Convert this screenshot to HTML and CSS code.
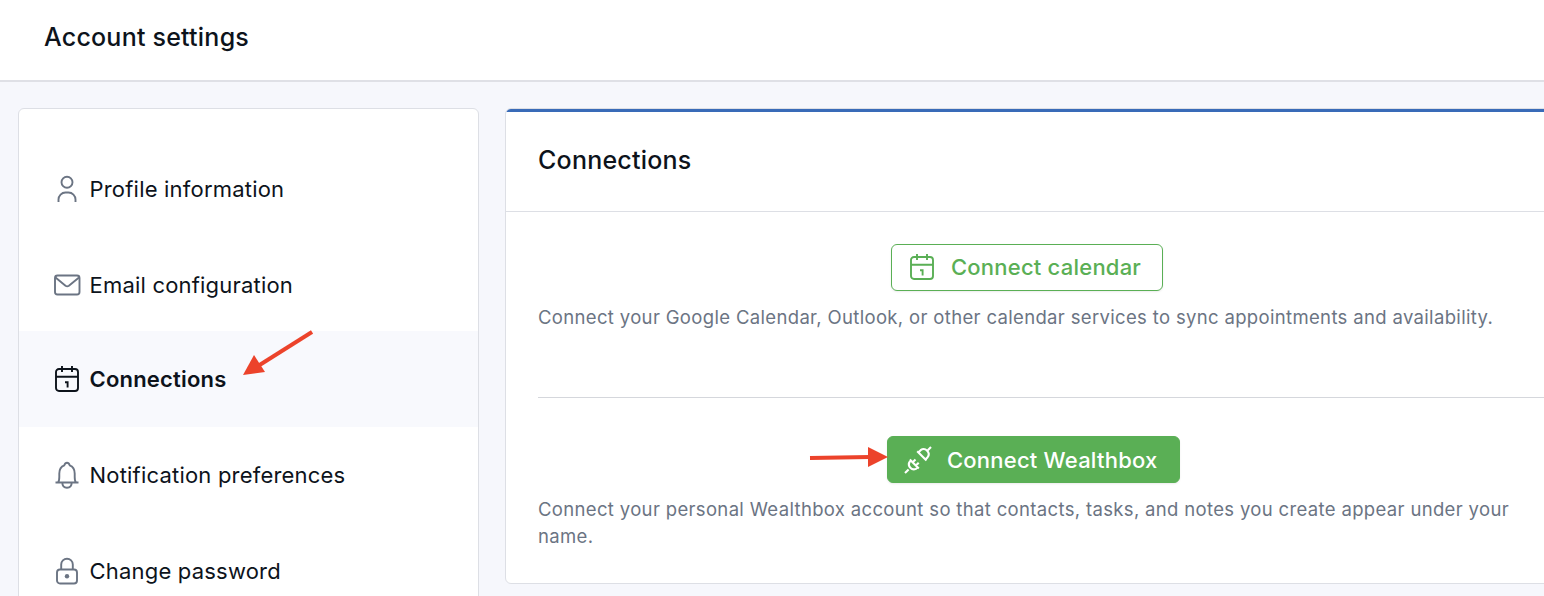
FILE: index.html
```html
<!DOCTYPE html>
<html lang="en">
<head>
<meta charset="UTF-8">
<title>Account settings</title>
<link rel="stylesheet" href="styles.css">
</head>
<body>
 <svg class="sprite">
  <symbol id="icon-calendar" viewBox="0 0 28 28">
   <rect x="3" y="4" width="22" height="22" rx="3"/>
   <path d="M3 11.800h22M9 1v6M19 1v6"/>
   <path d="M12 17.200h2.600v5.300"/>
  </symbol>
 </svg>

 <header class="page_header">
  <h1>Account settings</h1>
 </header>

 <div class="page_body">
  <nav class="sidebar">
   <a class="nav_item">
    <svg class="icon" viewBox="0 0 28 28"><circle cx="14" cy="7.2" r="5.5"/><path d="M5.500 27v-2.500a7 7 0 0 1 7-7h3a7 7 0 0 1 7 7v2.500"/></svg>
    <span class="nav_label">Profile information</span>
   </a>
   <a class="nav_item">
    <svg class="icon" viewBox="0 0 28 28"><rect x="2" y="4.500" width="24.500" height="19" rx="2.500"/><path d="M2.500 6.500l10 8.300q1.700 1.200 3.400 0L26 6.500"/></svg>
    <span class="nav_label">Email configuration</span>
   </a>
   <a class="nav_item active">
    <svg class="icon"><use href="#icon-calendar"/></svg>
    <span class="nav_label">Connections</span>
   </a>
   <a class="nav_item">
    <svg class="icon" viewBox="0 0 28 28"><path d="M2.500 21.500h23M5 21.500c1.200-1.200 1.300-3 1.300-5.500v-3.500c0-4.500 1.800-7 5-8.200C11.800 2.800 12.800 1.800 14 1.800s2.200 1 2.700 2.500c3.200 1.200 5 3.700 5 8.200V16c0 2.500.1 4.300 1.300 5.500M9.300 21.500c0 3.500 1.900 5.200 4.700 5.200s4.700-1.700 4.700-5.200"/></svg>
    <span class="nav_label">Notification preferences</span>
   </a>
   <a class="nav_item">
    <svg class="icon" viewBox="0 0 28 28"><rect x="4" y="12.500" width="20" height="14" rx="3"/><path d="M8.200 12.500V7.500a5.800 5.800 0 0 1 11.600 0v5"/><circle class="dot" cx="14" cy="19.200" r="2.200"/></svg>
    <span class="nav_label">Change password</span>
   </a>
  </nav>

  <main class="panel">
   <div class="panel_header">
    <h2>Connections</h2>
   </div>
   <div class="panel_body">
    <section class="connection calendar">
     <button class="btn btn_outline">
      <svg class="icon"><use href="#icon-calendar"/></svg>
      <span>Connect calendar</span>
     </button>
     <p>Connect your Google Calendar, Outlook, or other calendar services to sync appointments and availability.</p>
    </section>
    <section class="connection wealthbox">
     <button class="btn btn_solid">
      <svg class="icon" viewBox="0 0 28 28">
       <path d="M1 27l3.600-3.600M5.800 13.400l9 9M7 14.600l-1.700 1.700a5 5 0 0 0 6.600 6.600l1.700-1.700M8.700 16.300l2.800-2.800M11.900 19.500l2.800-2.800"/>
       <path d="M13.200 5.200l9.300 9.300M14.400 6.400l2.200-2.200a5 5 0 0 1 7 7l-2.200 2.200M23.600 4.400L27 1"/>
      </svg>
      <span>Connect Wealthbox</span>
     </button>
     <p>Connect your personal Wealthbox account so that contacts, tasks, and notes you create appear under your name.</p>
    </section>
   </div>
  </main>
 </div>

 <!-- pointers over the page -->
 <svg class="arrow arrow_nav" viewBox="0 0 72 48"><path d="M71 3L17 37" /><path class="head" d="M2 46l11-20 11 17z"/></svg>
 <svg class="arrow arrow_button" viewBox="0 0 80 24"><path d="M1 13l60-1"/><path class="head" d="M59 2v20l20-10z"/></svg>
</body>
</html>
```
FILE: styles.css
```css
* {
 box-sizing: border-box;
}
body {
 margin: 0;
 height: 596px;
 overflow: hidden;
 background-color: #f6f7fc;
 color: #0d131b;
 font-family: Inter, "Liberation Sans", sans-serif;
}
h1, h2, p {
 margin: 0;
}
h1, h2 {
 font-size: 25px;
 font-weight: 500;
 line-height: 32px;
 letter-spacing: 0.22px;
}
.sprite {
 display: none;
}
.page_header {
 height: 82px;
 padding: 21px 44px;
 background-color: #fff;
 border-bottom: 2px solid #dfe0e6;
}
.page_body {
 display: flex;
 align-items: flex-start;
 gap: 26px;
 height: 514px;
 padding: 26px 0 0 18px;
 overflow: hidden;
}
.sidebar {
 flex: none;
 width: 461px;
 height: 520px;
 padding-top: 31.3px;
 background-color: #fff;
 border: 1px solid #dddfe5;
 border-radius: 6px;
}
.nav_item {
 display: flex;
 align-items: center;
 gap: 8.5px;
 height: 95.4px;
 padding: 2.3px 0 0 34px;
 font-size: 22px;
 line-height: 26px;
 letter-spacing: 0.2px;
}
.nav_item.active {
 height: 95.5px;
 padding-top: 0;
 background-color: #f8f9fd;
 font-weight: 600;
}
.icon {
 flex: none;
 width: 28px;
 height: 28px;
 fill: none;
 stroke: #6b7483;
 stroke-width: 1.9;
}
.icon .dot {
 fill: #6b7483;
 stroke: none;
}
.active .icon {
 stroke: #0d131b;
}
.panel {
 flex: none;
 width: 1080px;
 height: 476px;
 background-color: #fff;
 border: 1px solid #dddfe5;
 border-radius: 6px;
 overflow: hidden;
}
.panel_header {
 height: 103px;
 padding: 32px;
 border-top: 3px solid #396bb8;
 border-bottom: 1px solid #dddfe5;
}
.panel_body {
 padding: 32px 0 0 32px;
}
.connection {
 display: flex;
 flex-direction: column;
}
.connection .btn {
 align-self: center;
}
.connection p {
 margin-top: 13px;
 color: #6b7483;
 font-size: 18.5px;
 line-height: 27px;
 letter-spacing: 0.34px;
}
.calendar {
 height: 154px;
 padding-right: 68px;
 border-bottom: 1px solid #d5d7dc;
}
.wealthbox {
 padding: 38px 55px 0 0;
}
.btn {
 display: flex;
 align-items: center;
 gap: 15px;
 height: 47px;
 padding: 0 0 0 16px;
 border: 1px solid #5aaf55;
 border-radius: 6px;
 box-shadow: 0 1px 2px rgba(0, 0, 0, 0.08);
 font-family: inherit;
 font-size: 22px;
 font-weight: 500;
 line-height: 26px;
 letter-spacing: 0.22px;
}
.btn_outline {
 width: 272px;
 padding-bottom: 2px;
 background-color: #fff;
 color: #5aaf55;
}
.btn_outline .icon {
 stroke: #5aaf55;
}
.btn_solid {
 width: 293px;
 background-color: #5aaf55;
 color: #fff;
}
.btn_solid .icon {
 stroke: #fff;
 stroke-width: 2.1;
}
.arrow {
 position: absolute;
 fill: none;
 stroke: #ec432b;
 stroke-width: 4;
}
.arrow .head {
 fill: #ec432b;
 stroke: none;
}
.arrow_nav {
 left: 241px;
 top: 329px;
 width: 72px;
 height: 48px;
}
.arrow_button {
 left: 809px;
 top: 445px;
 width: 80px;
 height: 24px;
}
```
